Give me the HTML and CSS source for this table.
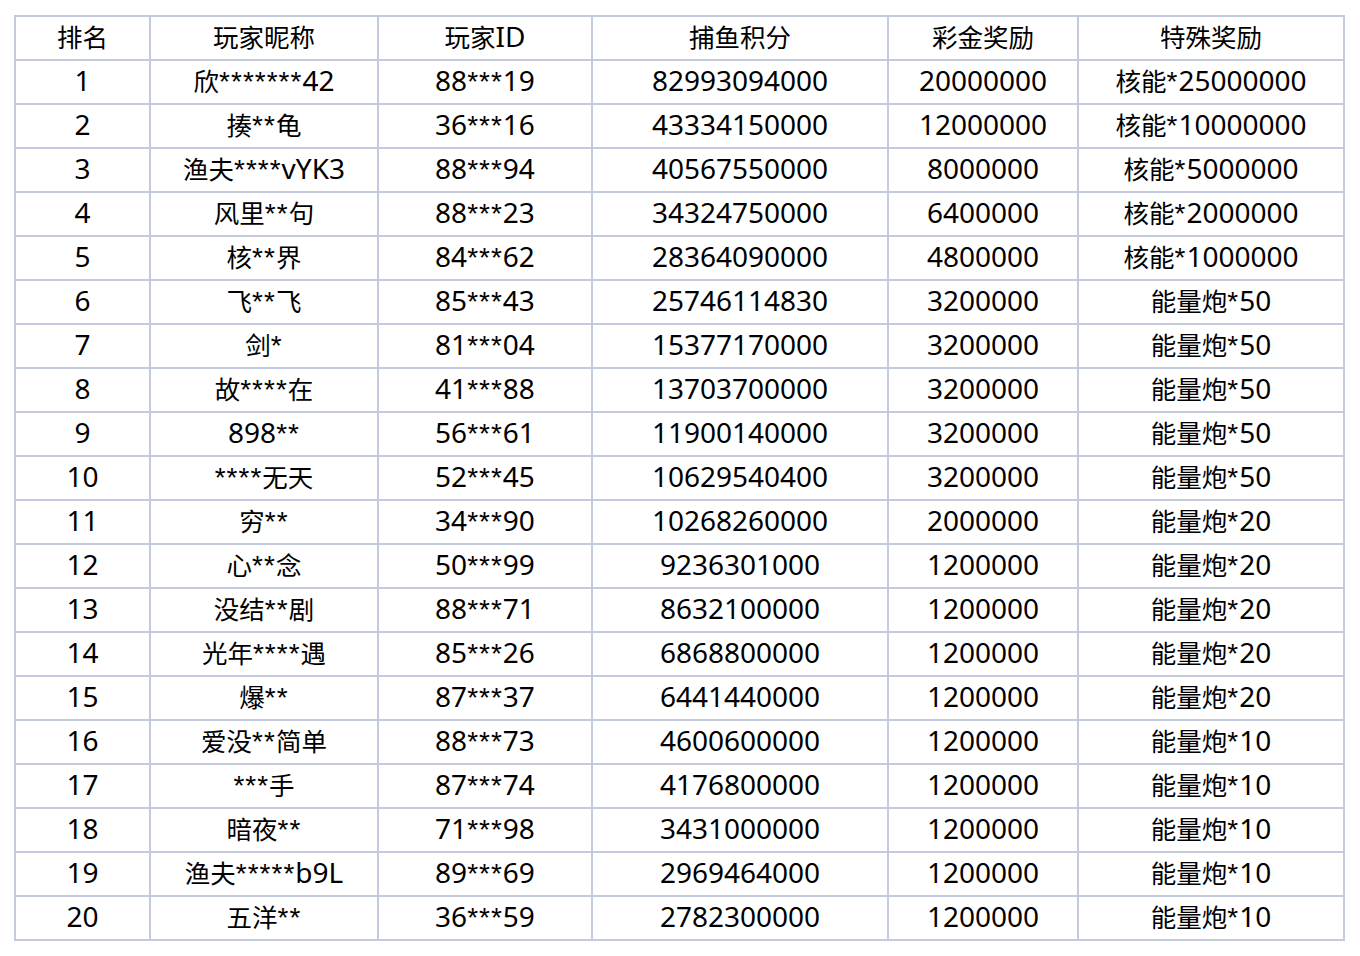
FILE: index.html
```html
<!DOCTYPE html>
<html lang="zh">
<head>
<meta charset="utf-8">
<link rel="stylesheet" href="styles.css">
</head>
<body>
<table class="rank">
<colgroup>
<col class="c1"><col class="c2"><col class="c3"><col class="c4"><col class="c5"><col class="c6">
</colgroup>
<thead>
<tr><th><span class="z">排名</span></th><th><span class="z">玩家昵称</span></th><th><span class="z">玩家</span>ID</th><th><span class="z">捕鱼积分</span></th><th><span class="z">彩金奖励</span></th><th><span class="z">特殊奖励</span></th></tr>
</thead>
<tbody>
<tr><td>1</td><td><span class="z">欣</span><span class="s">*******</span>42</td><td>88<span class="s">***</span>19</td><td>82993094000</td><td>20000000</td><td><span class="z">核能</span><span class="s">*</span>25000000</td></tr>
<tr><td>2</td><td><span class="z">揍</span><span class="s">**</span><span class="z">龟</span></td><td>36<span class="s">***</span>16</td><td>43334150000</td><td>12000000</td><td><span class="z">核能</span><span class="s">*</span>10000000</td></tr>
<tr><td>3</td><td><span class="z">渔夫</span><span class="s">****</span>vYK3</td><td>88<span class="s">***</span>94</td><td>40567550000</td><td>8000000</td><td><span class="z">核能</span><span class="s">*</span>5000000</td></tr>
<tr><td>4</td><td><span class="z">风里</span><span class="s">**</span><span class="z">句</span></td><td>88<span class="s">***</span>23</td><td>34324750000</td><td>6400000</td><td><span class="z">核能</span><span class="s">*</span>2000000</td></tr>
<tr><td>5</td><td><span class="z">核</span><span class="s">**</span><span class="z">界</span></td><td>84<span class="s">***</span>62</td><td>28364090000</td><td>4800000</td><td><span class="z">核能</span><span class="s">*</span>1000000</td></tr>
<tr><td>6</td><td><span class="z">飞</span><span class="s">**</span><span class="z">飞</span></td><td>85<span class="s">***</span>43</td><td>25746114830</td><td>3200000</td><td><span class="z">能量炮</span><span class="s">*</span>50</td></tr>
<tr><td>7</td><td><span class="z">剑</span><span class="s">*</span></td><td>81<span class="s">***</span>04</td><td>15377170000</td><td>3200000</td><td><span class="z">能量炮</span><span class="s">*</span>50</td></tr>
<tr><td>8</td><td><span class="z">故</span><span class="s">****</span><span class="z">在</span></td><td>41<span class="s">***</span>88</td><td>13703700000</td><td>3200000</td><td><span class="z">能量炮</span><span class="s">*</span>50</td></tr>
<tr><td>9</td><td>898<span class="s">**</span></td><td>56<span class="s">***</span>61</td><td>11900140000</td><td>3200000</td><td><span class="z">能量炮</span><span class="s">*</span>50</td></tr>
<tr><td>10</td><td><span class="s">****</span><span class="z">无天</span></td><td>52<span class="s">***</span>45</td><td>10629540400</td><td>3200000</td><td><span class="z">能量炮</span><span class="s">*</span>50</td></tr>
<tr><td>11</td><td><span class="z">穷</span><span class="s">**</span></td><td>34<span class="s">***</span>90</td><td>10268260000</td><td>2000000</td><td><span class="z">能量炮</span><span class="s">*</span>20</td></tr>
<tr><td>12</td><td><span class="z">心</span><span class="s">**</span><span class="z">念</span></td><td>50<span class="s">***</span>99</td><td>9236301000</td><td>1200000</td><td><span class="z">能量炮</span><span class="s">*</span>20</td></tr>
<tr><td>13</td><td><span class="z">没结</span><span class="s">**</span><span class="z">剧</span></td><td>88<span class="s">***</span>71</td><td>8632100000</td><td>1200000</td><td><span class="z">能量炮</span><span class="s">*</span>20</td></tr>
<tr><td>14</td><td><span class="z">光年</span><span class="s">****</span><span class="z">遇</span></td><td>85<span class="s">***</span>26</td><td>6868800000</td><td>1200000</td><td><span class="z">能量炮</span><span class="s">*</span>20</td></tr>
<tr><td>15</td><td><span class="z">爆</span><span class="s">**</span></td><td>87<span class="s">***</span>37</td><td>6441440000</td><td>1200000</td><td><span class="z">能量炮</span><span class="s">*</span>20</td></tr>
<tr><td>16</td><td><span class="z">爱没</span><span class="s">**</span><span class="z">简单</span></td><td>88<span class="s">***</span>73</td><td>4600600000</td><td>1200000</td><td><span class="z">能量炮</span><span class="s">*</span>10</td></tr>
<tr><td>17</td><td><span class="s">***</span><span class="z">手</span></td><td>87<span class="s">***</span>74</td><td>4176800000</td><td>1200000</td><td><span class="z">能量炮</span><span class="s">*</span>10</td></tr>
<tr><td>18</td><td><span class="z">暗夜</span><span class="s">**</span></td><td>71<span class="s">***</span>98</td><td>3431000000</td><td>1200000</td><td><span class="z">能量炮</span><span class="s">*</span>10</td></tr>
<tr><td>19</td><td><span class="z">渔夫</span><span class="s">*****</span>b9L</td><td>89<span class="s">***</span>69</td><td>2969464000</td><td>1200000</td><td><span class="z">能量炮</span><span class="s">*</span>10</td></tr>
<tr><td>20</td><td><span class="z">五洋</span><span class="s">**</span></td><td>36<span class="s">***</span>59</td><td>2782300000</td><td>1200000</td><td><span class="z">能量炮</span><span class="s">*</span>10</td></tr>
</tbody>
</table>
</body>
</html>
```

FILE: styles.css
```css
html, body {
  margin: 0;
  padding: 0;
  background: #ffffff;
}
body {
  padding: 15px 0 0 14px;
  font-family: "Noto Sans", "Noto Sans CJK SC", sans-serif;
  color: #000000;
}
.rank {
  border-collapse: collapse;
  table-layout: fixed;
  width: 1330px;
}
.c1 { width: 135px; }
.c2 { width: 228px; }
.c3 { width: 214px; }
.c4 { width: 296px; }
.c5 { width: 190px; }
.c6 { width: 266px; }
.rank th,
.rank td {
  border: 2px solid #c5cbdf;
  padding: 0 0 4px;
  text-align: center;
  vertical-align: middle;
  font-size: 28px;
  font-weight: normal;
  line-height: 38px;
  white-space: nowrap;
}
.z {
  font-family: "Noto Sans CJK SC", sans-serif;
  font-size: 25.5px;
  line-height: 0;
}
.s {
  font-family: "Liberation Sans", sans-serif;
  font-size: 28px;
  line-height: 0;
  letter-spacing: 1px;
}
```
